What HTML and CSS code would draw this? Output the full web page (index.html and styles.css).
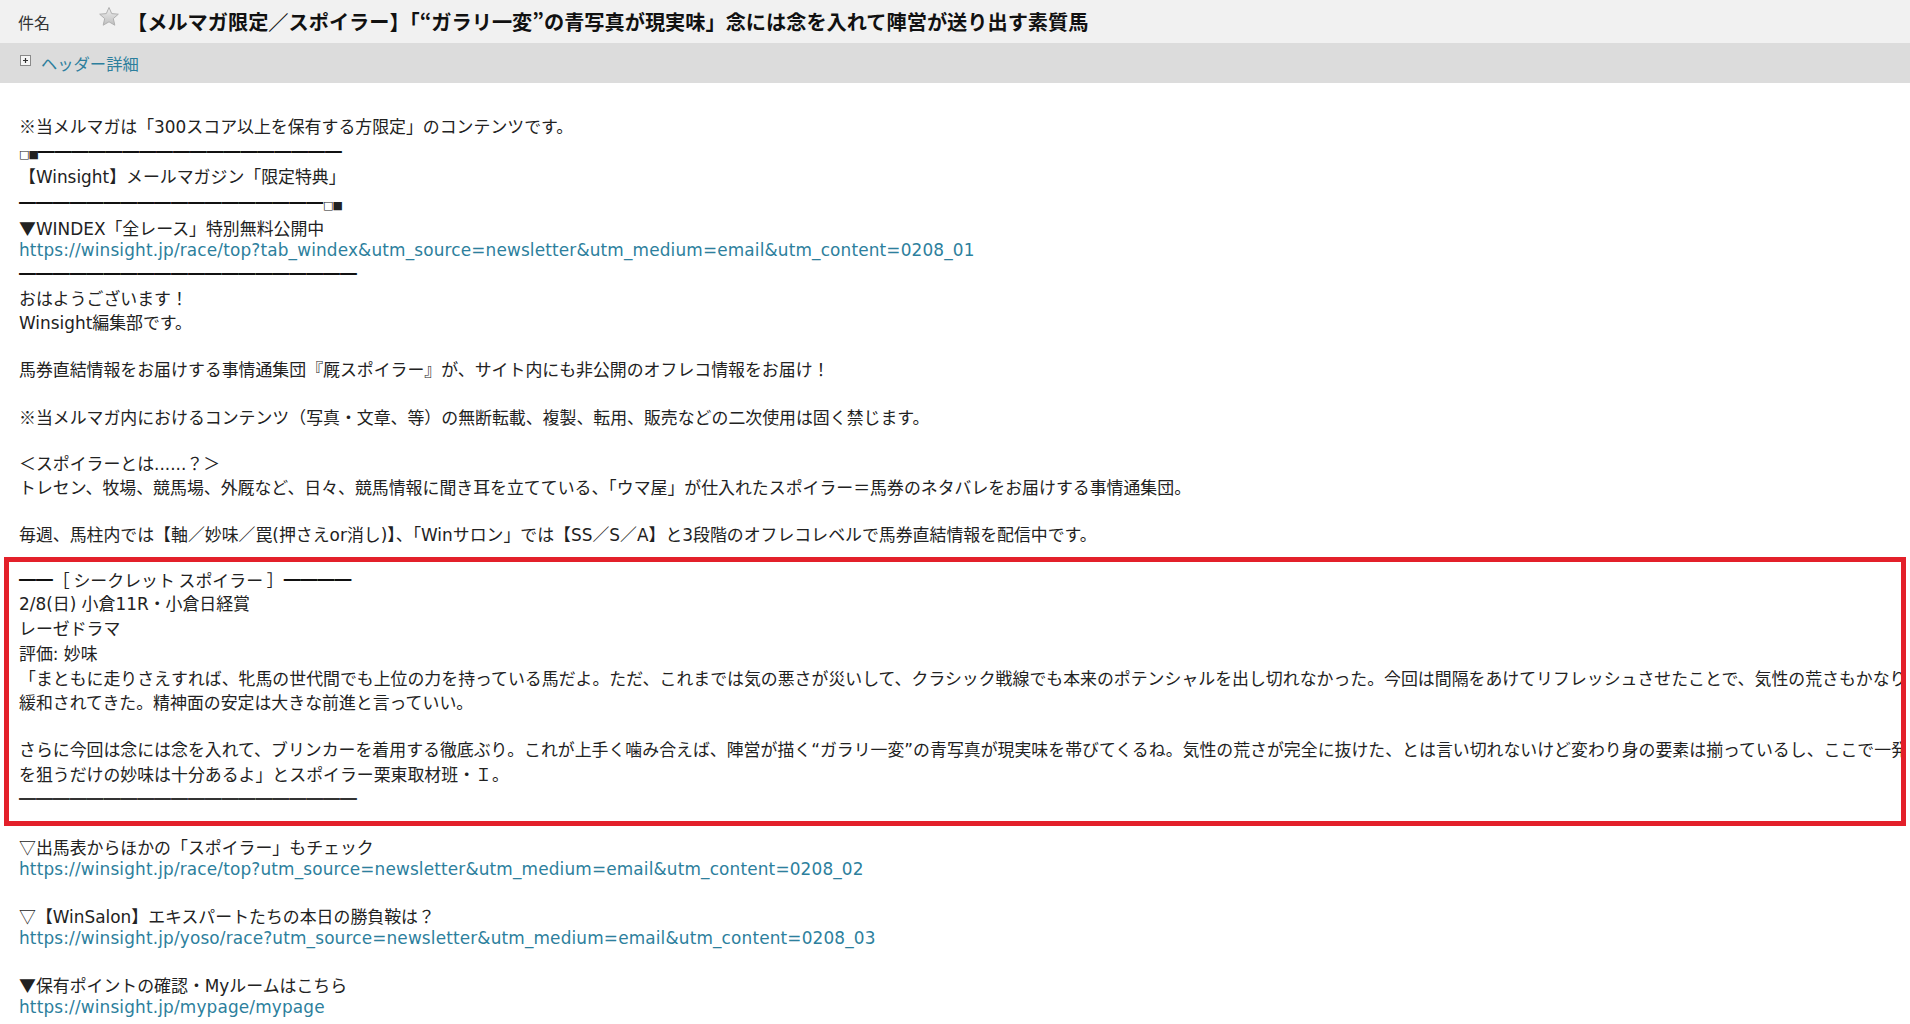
FILE: index.html
```html
<!DOCTYPE html>
<html lang="ja">
<head>
<meta charset="utf-8">
<title>メール</title>
<link rel="stylesheet" href="styles.css">
</head>
<body>
<div class="subject-bar">
  <span class="subject-label">件名</span>
  <svg class="star" width="22" height="22" viewBox="0 0 22 22" aria-hidden="true">
    <defs>
      <linearGradient id="sg" x1="0" y1="0" x2="0" y2="1">
        <stop offset="0" stop-color="#f0f0f0"/>
        <stop offset="1" stop-color="#bebebe"/>
      </linearGradient>
    </defs>
    <path d="M11 1.5 L13.7 7.6 L20.3 8.2 L15.3 12.6 L16.8 19.2 L11 15.8 L5.2 19.2 L6.7 12.6 L1.7 8.2 L8.3 7.6 Z" fill="url(#sg)" stroke="#b0b0b0" stroke-width="1" stroke-linejoin="round"/>
  </svg>
  <span class="subject-title">【メルマガ限定／スポイラー】「“ガラリ一変”の青写真が現実味」念には念を入れて陣営が送り出す素質馬</span>
</div>
<div class="header-bar">
  <svg class="plus" width="11" height="11" viewBox="0 0 11 11" aria-hidden="true">
    <rect x="0.5" y="0.5" width="10" height="10" fill="#f6f6f6" stroke="#8a8a8a"/>
    <path d="M3 5.5 H8 M5.5 3 V8" stroke="#333" stroke-width="1.2"/>
  </svg>
  <span class="header-link">ヘッダー詳細</span>
</div>

<div class="mail">
  <div class="sec sec-top">
    <div class="ln"><span class="jp">※</span>当メルマガは「300スコア以上を保有する方限定」のコンテンツです。</div>
    <div class="ln ln-rule"><span class="sq">□■</span><span class="rule">━━━━━━━━━━━━━━━━━━</span></div>
    <div class="ln">【Winsight】メールマガジン「限定特典」</div>
    <div class="ln ln-rule"><span class="rule">━━━━━━━━━━━━━━━━━━</span><span class="sq">□■</span></div>
    <div class="ln ln-tight"><span class="jp">▼</span>WINDEX「全レース」特別無料公開中</div>
    <div class="ln ln-link"><a class="link" href="#">https://winsight.jp/race/top?tab_windex&amp;utm_source=newsletter&amp;utm_medium=email&amp;utm_content=0208_01</a></div>
    <div class="ln ln-rule2"><span class="rule">━━━━━━━━━━━━━━━━━━━━</span></div>
    <div class="ln">おはようございます！</div>
    <div class="ln">Winsight編集部です。</div>
    <div class="ln blank"></div>
    <div class="ln">馬券直結情報をお届けする事情通集団『厩スポイラー』が、サイト内にも非公開のオフレコ情報をお届け！</div>
    <div class="ln blank"></div>
    <div class="ln"><span class="jp">※</span>当メルマガ内におけるコンテンツ（写真・文章、等）の無断転載、複製、転用、販売などの二次使用は固く禁じます。</div>
    <div class="ln blank"></div>
    <div class="ln">＜スポイラーとは......？＞</div>
    <div class="ln">トレセン、牧場、競馬場、外厩など、日々、競馬情報に聞き耳を立てている、「ウマ屋」が仕入れたスポイラー＝馬券のネタバレをお届けする事情通集団。</div>
    <div class="ln blank"></div>
    <div class="ln">毎週、馬柱内では【軸／妙味／罠(押さえor消し)】、「Winサロン」では【SS／S／A】と3段階のオフレコレベルで馬券直結情報を配信中です。</div>
  </div>

  <div class="highlight">
    <div class="sec sec-box">
      <div class="ln ln-wide"><span class="rule">━━</span><span class="jp">［ シークレット スポイラー ］</span><span class="rule">━━━━</span></div>
      <div class="ln ln-wide">2/8(日) 小倉11R・小倉日経賞</div>
      <div class="ln ln-wide">レーゼドラマ</div>
      <div class="ln ln-wide">評価: 妙味</div>
      <div class="ln ln-wide">「まともに走りさえすれば、牝馬の世代間でも上位の力を持っている馬だよ。ただ、これまでは気の悪さが災いして、クラシック戦線でも本来のポテンシャルを出し切れなかった。今回は間隔をあけてリフレッシュさせたことで、気性の荒さもかなり</div>
      <div class="ln ln-wide">緩和されてきた。精神面の安定は大きな前進と言っていい。</div>
      <div class="ln blank"></div>
      <div class="ln">さらに今回は念には念を入れて、ブリンカーを着用する徹底ぶり。これが上手く噛み合えば、陣営が描く“ガラリ一変”の青写真が現実味を帯びてくるね。気性の荒さが完全に抜けた、とは言い切れないけど変わり身の要素は揃っているし、ここで一発</div>
      <div class="ln">を狙うだけの妙味は十分あるよ」とスポイラー栗東取材班・Ｉ。</div>
      <div class="ln"><span class="rule rule-light">━━━━━━━━━━━━━━━━━━━━</span></div>
    </div>
  </div>

  <div class="sec sec-bottom">
    <div class="ln"><span class="jp">▽</span>出馬表からほかの「スポイラー」もチェック</div>
    <div class="ln"><a class="link" href="#">https://winsight.jp/race/top?utm_source=newsletter&amp;utm_medium=email&amp;utm_content=0208_02</a></div>
    <div class="ln blank"></div>
    <div class="ln"><span class="jp">▽</span>【WinSalon】エキスパートたちの本日の勝負鞍は？</div>
    <div class="ln"><a class="link" href="#">https://winsight.jp/yoso/race?utm_source=newsletter&amp;utm_medium=email&amp;utm_content=0208_03</a></div>
    <div class="ln blank"></div>
    <div class="ln"><span class="jp">▼</span>保有ポイントの確認・Myルームはこちら</div>
    <div class="ln"><a class="link" href="#">https://winsight.jp/mypage/mypage</a></div>
  </div>
</div>
</body>
</html>
```
FILE: styles.css
```css
html, body {
  margin: 0;
  padding: 0;
  background: #ffffff;
}
body {
  width: 1910px;
  height: 1024px;
  overflow: hidden;
  font-family: "DejaVu Sans", "Noto Sans CJK JP", sans-serif;
  color: #222222;
}

.subject-bar {
  height: 43px;
  background: #f1f1f1;
  display: flex;
  align-items: center;
  padding-left: 18px;
  box-sizing: border-box;
}
.subject-label {
  font-family: "Noto Sans CJK JP", sans-serif;
  font-size: 16px;
  color: #333333;
  width: 80px;
}
.star {
  margin-top: -9px;
  margin-right: 7px;
}
.subject-title {
  font-family: "Noto Sans CJK JP", sans-serif;
  font-weight: bold;
  font-size: 20.2px;
  color: #111111;
  white-space: nowrap;
}

.header-bar {
  height: 40px;
  background: #dcdcdc;
  display: flex;
  align-items: center;
  padding-left: 20px;
  box-sizing: border-box;
}
.plus {
  margin-top: -6px;
  margin-right: 10px;
}
.header-link {
  font-family: "Noto Sans CJK JP", sans-serif;
  font-size: 16.3px;
  color: #2d7f9d;
}

.mail {
  padding-top: 30.5px;
  font-size: 16.9px;
  white-space: nowrap;
}
.sec {
  padding-left: 19px;
}
.sec-top .ln {
  line-height: 24px;
  height: 24px;
}
.sec-top .ln-rule {
  line-height: 27px;
  height: 27px;
}
.sec-top .ln-tight {
  line-height: 23px;
  height: 23px;
}
.sec-top .ln-link {
  line-height: 22px;
  height: 22px;
}
.sec-top .ln-rule2 {
  line-height: 26px;
  height: 26px;
}
.sec-top .blank {
  height: 23px;
}
.jp, .rule {
  font-family: "Noto Sans CJK JP", sans-serif;
}
.rule {
  color: #111111;
}
.rule-light {
  color: #333333;
}
.sq {
  font-family: "DejaVu Sans", sans-serif;
  font-size: 11px;
  vertical-align: 1px;
  letter-spacing: -1px;
}
.link {
  color: #2d7f9d;
  text-decoration: none;
  letter-spacing: 0.15px;
}

.highlight {
  margin: 10px 4px 0 4px;
  border: 5px solid #e3202a;
  padding: 6px 0 10px 0;
  overflow: hidden;
}
.sec-box {
  padding-left: 10px;
}
.sec-box .ln {
  line-height: 24.4px;
  height: 24.4px;
}
.sec-box .ln-wide {
  line-height: 24.8px;
  height: 24.8px;
}
.sec-box .blank {
  height: 22px;
}
.sec-bottom {
  margin-top: 8.5px;
}
.sec-bottom .ln {
  line-height: 23px;
  height: 23px;
}
```
